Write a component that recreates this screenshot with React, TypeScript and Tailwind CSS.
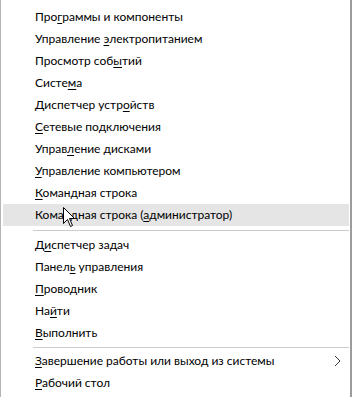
import React from "react";

type Item = { pre: string; key: string; post: string; active?: boolean; submenu?: boolean };

const groups: Item[][] = [
  [
    { pre: "Про", key: "г", post: "раммы и компоненты" },
    { pre: "Управление ", key: "э", post: "лектропитанием" },
    { pre: "Просмотр соб", key: "ы", post: "тий" },
    { pre: "Систе", key: "м", post: "а" },
    { pre: "Диспетчер устр", key: "о", post: "йств" },
    { pre: "", key: "С", post: "етевые подключения" },
    { pre: "Управ", key: "л", post: "ение дисками" },
    { pre: "", key: "У", post: "правление компьютером" },
    { pre: "", key: "К", post: "омандная строка" },
    { pre: "Командная строка (", key: "а", post: "дминистратор)", active: true },
  ],
  [
    { pre: "Д", key: "и", post: "спетчер задач" },
    { pre: "Панел", key: "ь", post: " управления" },
    { pre: "", key: "П", post: "роводник" },
    { pre: "На", key: "й", post: "ти" },
    { pre: "", key: "В", post: "ыполнить" },
  ],
  [
    { pre: "", key: "З", post: "авершение работы или выход из системы", submenu: true },
    { pre: "", key: "Р", post: "абочий стол" },
  ],
];

const Cursor = () => (
  <svg
    className="absolute left-[62px] top-[207px] pointer-events-none"
    width="13"
    height="21"
    viewBox="0 0 13 21"
  >
    <path
      d="M0.5 0.5 L0.5 16.5 L4.5 12.5 L7.5 19.5 L9.5 18.5 L6.5 11.5 L11.5 11.5 Z"
      fill="#fff"
      stroke="#000"
      strokeWidth="1"
      strokeLinejoin="miter"
    />
  </svg>
);

const Row = ({ item }: { item: Item }) => (
  <div
    className={`relative flex h-[22px] items-center justify-between pl-[32px] pr-[8px] ${
      item.active ? "bg-[#e5e5e5]" : ""
    }`}
  >
    <span className="whitespace-pre">
      {item.pre}
      <span className="underline decoration-1 underline-offset-[2px]">{item.key}</span>
      {item.post}
    </span>
    {item.submenu && (
      <svg width="7" height="12" viewBox="0 0 7 12">
        <path d="M1 1 L6 6 L1 11" fill="none" stroke="#333" strokeWidth="1" />
      </svg>
    )}
  </div>
);

export default function App() {
  return (
    <div
      className="relative h-[397px] w-[352px] overflow-hidden border-l border-l-[#b4b4b4] border-r-2 border-r-[#9c9c9c] bg-white pt-[6px] pl-[2px] pr-[1px] text-[12px] text-black"
      style={{ fontFamily: 'Lato, "Noto Sans", sans-serif' }}
    >
      {groups.map((g, gi) => (
        <div key={gi}>
          {gi === 1 && (
            <div className="flex h-[8px] items-center pl-[30px]">
              <div className="h-px w-full bg-[#cccccc]" />
            </div>
          )}
          {gi === 2 && (
            <div className="flex h-[6px] items-center pl-[30px]">
              <div className="h-px w-full bg-[#cccccc]" />
            </div>
          )}
          {g.map((it, i) => (
            <Row key={i} item={it} />
          ))}
        </div>
      ))}
      <Cursor />
    </div>
  );
}
